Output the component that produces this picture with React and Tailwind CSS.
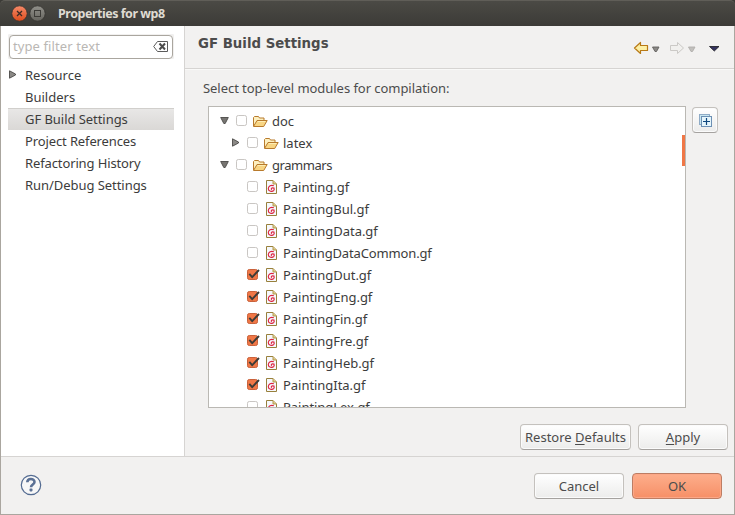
import React from 'react';

const Arrow = ({ open }) => (
  <svg className="mb-[2px] block shrink-0" width="9" height="9" viewBox="0 0 9 9">
    {open ? (
      <path d="M.7 1.5h7.6L5.2 7.5H3.8z" fill="#777572" stroke="#4b4947" strokeWidth=".9" />
    ) : (
      <path d="M1.500.8v7.400L7.500 5V4z" fill="#8b8986" stroke="#4b4947" strokeWidth=".9" />
    )}
  </svg>
);

const Check = ({ on }) => (
  <svg className="block shrink-0 overflow-visible" width="12" height="12" viewBox="0 0 12 12">
    <rect x=".5" y=".5" width="10" height="10" rx="1.8" fill={on ? '#f07746' : '#fff'} stroke={on ? '#c9623b' : '#c9c6c3'} />
    {on && <path d="M2.300 4.800l2.900 3.300L12 1" fill="none" stroke="#3c3b37" strokeWidth="1.900" />}
  </svg>
);

const Folder = () => (
  <svg className="block shrink-0" width="16" height="16" viewBox="0 0 16 16">
    <path d="M1.500 13V4.500L2.500 3.500h4l1 1.500h4.500v3" fill="#fdf0c0" stroke="#b87a2c" />
    <path d="M1.500 13.500L5 7.500h10.200L11.700 13.500z" fill="#f8d583" stroke="#b87a2c" />
    <path d="M5.800 8.500h7.600" stroke="#fdedb5" />
  </svg>
);

const FileIcon = () => (
  <svg className="block shrink-0" width="11" height="14" viewBox="0 0 11 14">
    <path d="M.5.5h6.500l3.500 3.500v9.500H.5z" fill="#f5f8fc" stroke="#98803c" />
    <path d="M7 .5V4h3.500" fill="#e2cd8c" stroke="#b29a50" />
    <path d="M7.800 5.800C5.200 4.400 2.300 6.300 2.300 8.700c0 2.600 4 3.500 5.500 1.600.8-1.100.4-2.500-1-2.500-1.400 0-2 1.200-1.100 2M5.700 8h2.800" fill="none" stroke="#dc2440" strokeWidth="1.150" />
  </svg>
);

const side = [
  ['Resource', ''],
  ['Builders', ''],
  ['GF Build Settings', 'tracking-[-0.05px]'],
  ['Project References', 'tracking-[-0.12px]'],
  ['Refactoring History', 'tracking-[-0.12px]'],
  ['Run/Debug Settings', 'tracking-[-0.05px]'],
];

const files = [
  ['Painting.gf', false],
  ['PaintingBul.gf', false],
  ['PaintingData.gf', false],
  ['PaintingDataCommon.gf', false],
  ['PaintingDut.gf', true],
  ['PaintingEng.gf', true],
  ['PaintingFin.gf', true],
  ['PaintingFre.gf', true],
  ['PaintingHeb.gf', true],
  ['PaintingIta.gf', true],
  ['PaintingLex.gf', false],
];

const Button = ({ className, primary, children }) => (
  <button
    className={
      'flex h-[26px] shrink-0 items-center justify-center rounded-[4px] border whitespace-nowrap ' +
      (primary
        ? 'border-[#bd7d63] bg-linear-to-b from-[#fdae8c] to-[#f68f66] shadow-[inset_0_0_0_1px_#fca787] '
        : 'border-[#c4c1bd] border-b-[#a5a29f] bg-linear-to-b from-white to-[#ececeb] shadow-[inset_0_0_0_1px_#fbfbfb] ') +
      className
    }
  >
    {children}
  </button>
);

export default function App() {
  return (
    <div className="flex h-[515px] w-[735px] flex-col overflow-hidden bg-[#3c3b37] font-['Noto_Sans','Open_Sans',sans-serif] text-[13px] leading-[22px] text-[#4c4c4c]">
      <header className="flex h-[26px] shrink-0 items-center rounded-t-[5px] border-t border-[#605e58] bg-linear-to-b from-[#4b4a45] to-[#3c3b37] pl-[11px]">
        <svg className="mt-[1px] block shrink-0" width="36" height="18" viewBox="0 0 36 18">
          <defs>
            <linearGradient id="close" x2="0" y2="1"><stop stopColor="#f58a69" /><stop offset="1" stopColor="#de4c1c" /></linearGradient>
            <linearGradient id="max" x2="0" y2="1"><stop stopColor="#91908a" /><stop offset="1" stopColor="#65645e" /></linearGradient>
          </defs>
          <circle cx="8.500" cy="8.500" r="7.700" fill="url(#close)" stroke="#33322e" strokeWidth=".8" />
          <path d="M6 6l5 5M11 6l-5 5" stroke="#3b2b25" strokeWidth="1.300" />
          <circle cx="26.500" cy="8.500" r="7.700" fill="url(#max)" stroke="#33322e" strokeWidth=".8" />
          <rect x="23.500" y="5.500" width="6" height="6" fill="none" stroke="#3c3b37" />
        </svg>
        <h1 className="ml-[11px] text-[12.500px] font-bold tracking-[-0.48px] whitespace-nowrap text-[#dfdbd2]">Properties for wp8</h1>
      </header>

      <div className="flex min-h-0 flex-1 flex-col border-x border-b border-[#aaa69f] bg-[#f2f1f0]">
        <div className="flex h-[430px] shrink-0">
          <aside className="w-[184px] shrink-0 border-r border-[#d6d4d2] bg-white pt-[8px] pl-[7px]">
            <div className="flex h-[25px] w-[166px] items-center rounded-[1px] border border-[#f1f0ef] bg-[#f1f0ef]">
              <div className="flex h-[24px] w-full items-center justify-between rounded-[4px] border border-[#aaa69f] bg-white pr-[4px] pl-[3px]">
                <span className="-mt-[2px] tracking-[0.1px] text-[#bab7b4]">type filter text</span>
                <svg className="block" width="15" height="11" viewBox="0 0 15 11">
                  <path d="M4.500.5h10v10h-10L.7 5.500z" fill="#fff" stroke="#5b5b5b" />
                  <path d="M6.500 2.500l5.500 6M12 2.500l-5.500 6" stroke="#4c4c4c" strokeWidth="2" />
                </svg>
              </div>
            </div>
            <nav className="mt-[5px]">
              {side.map(([name, track], i) => (
                <div key={name} className={'flex h-[22px] w-[166px] items-center ' + (i === 2 ? 'bg-linear-to-b from-[#e9e8e7] to-[#dad8d6] shadow-[inset_0_1px_0_#d1cfcc]' : '')}>
                  <span className="w-[17px] shrink-0">{i === 0 && <Arrow />}</span>
                  <span className={'whitespace-nowrap text-[#3c3c3c] ' + track}>{name}</span>
                </div>
              ))}
            </nav>
          </aside>

          <main className="flex min-w-0 flex-1 flex-col">
            <div className="flex h-[43px] shrink-0 justify-between border-b border-[#d6d4d2] pr-[13px] pl-[13px]">
              <h2 className="mt-[7px] font-['DejaVu_Sans',sans-serif] text-[13.330px] font-bold">GF Build Settings</h2>
              <svg className="mt-[14px] block" width="88" height="16" viewBox="0 0 88 16">
                <path d="M1.500 8L7.500 2.500v3h7v5h-7v3z" fill="#fdf0a5" stroke="#b87916" strokeWidth="1.200" strokeLinejoin="round" />
                <path d="M19.500 7h6.500L23.500 11.500h-1.500z" fill="#8b8986" stroke="#62605e" strokeWidth=".9" />
                <path d="M50.500 8L44.500 2.500v3h-7v5h7v3z" fill="#f1f0ee" stroke="#cbc9c6" strokeLinejoin="round" />
                <path d="M55.500 7h6.500L59.500 11.500h-1.500z" fill="#c2c0bd" stroke="#b1afac" strokeWidth=".9" />
                <path d="M76.500 6.500h9.500L81.300 11z" fill="#34325f" stroke="#17171c" strokeWidth=".8" />
              </svg>
            </div>
            <div className="h-[37px] shrink-0 border-t border-[#f9f9f8] pt-[7px] pl-[18px] tracking-[-0.05px]">Select top-level modules for compilation:</div>
            <div className="flex shrink-0 items-start gap-[6px] pl-[23px]">
              <div className="flex h-[302px] w-[478px] justify-between overflow-hidden border border-[#bab8b3] bg-white pt-[3px]">
                <div className="text-[#3c3c3c]">
                  <div className="flex h-[22px] items-center pl-[11px]">
                    <Arrow open /><span className="w-[7px]" /><Check /><span className="w-[4px]" /><Folder /><span className="ml-[4px]">doc</span>
                  </div>
                  <div className="flex h-[22px] items-center pl-[22px]">
                    <Arrow /><span className="w-[7px]" /><Check /><span className="w-[4px]" /><Folder /><span className="ml-[4px]">latex</span>
                  </div>
                  <div className="flex h-[22px] items-center pl-[11px]">
                    <Arrow open /><span className="w-[7px]" /><Check /><span className="w-[4px]" /><Folder /><span className="ml-[4px] tracking-[-0.45px]">grammars</span>
                  </div>
                  {files.map(([name, on]) => (
                    <div key={name} className="flex h-[22px] items-center pl-[38px]">
                      <Check on={on} /><span className="w-[7px]" /><FileIcon /><span className={'ml-[6px] ' + (name === 'PaintingDataCommon.gf' ? 'tracking-[-0.14px]' : 'tracking-[-0.04px]')}>{name}</span>
                    </div>
                  ))}
                </div>
                <div className="mt-[25px] h-[31px] w-[3px] bg-[#f07746]" />
              </div>
              <Button className="mt-[1px] w-[26px]">
                <svg className="mt-[1px] ml-[1px] block shrink-0" width="13" height="13" viewBox="0 0 13 13">
                  <rect x=".5" y=".5" width="10" height="10" fill="#c8e6f0" stroke="#8fabc6" />
                  <rect x="2.500" y="2.500" width="10" height="10" fill="#e6f6fc" stroke="#6d90b4" />
                  <path d="M7.500 4v7M4 7.500h7" stroke="#10477e" strokeWidth="1.200" />
                </svg>
              </Button>
            </div>
            <div className="mt-[16px] flex justify-end gap-[7px] pr-[6px]">
              <Button className="w-[111px]"><span>Restore <u className="underline-offset-2">D</u>efaults</span></Button>
              <Button className="w-[90px]"><span><u className="underline-offset-2">A</u>pply</span></Button>
            </div>
          </main>
        </div>

        <footer className="flex flex-1 items-start justify-between border-t border-[#d6d4d2] pt-[16px] pr-[12px] pl-[19px]">
          <svg className="mt-[1px] block" width="22" height="22" viewBox="0 0 22 22">
            <circle cx="11" cy="11" r="9.700" fill="#f7f7f7" stroke="#536b91" strokeWidth="1.200" />
            <path d="M7.300 8.300C7.300 3.800 14.500 4 14.500 7.900c0 2.600-3.500 2.600-3.500 5.400" fill="none" stroke="#5b7195" strokeWidth="2.600" />
            <rect x="9.500" y="14.600" width="3" height="2.800" rx=".8" fill="#5b7195" />
          </svg>
          <div className="flex gap-[8px]">
            <Button className="w-[90px]">Cancel</Button>
            <Button primary className="w-[90px]">OK</Button>
          </div>
        </footer>
      </div>
    </div>
  );
}
